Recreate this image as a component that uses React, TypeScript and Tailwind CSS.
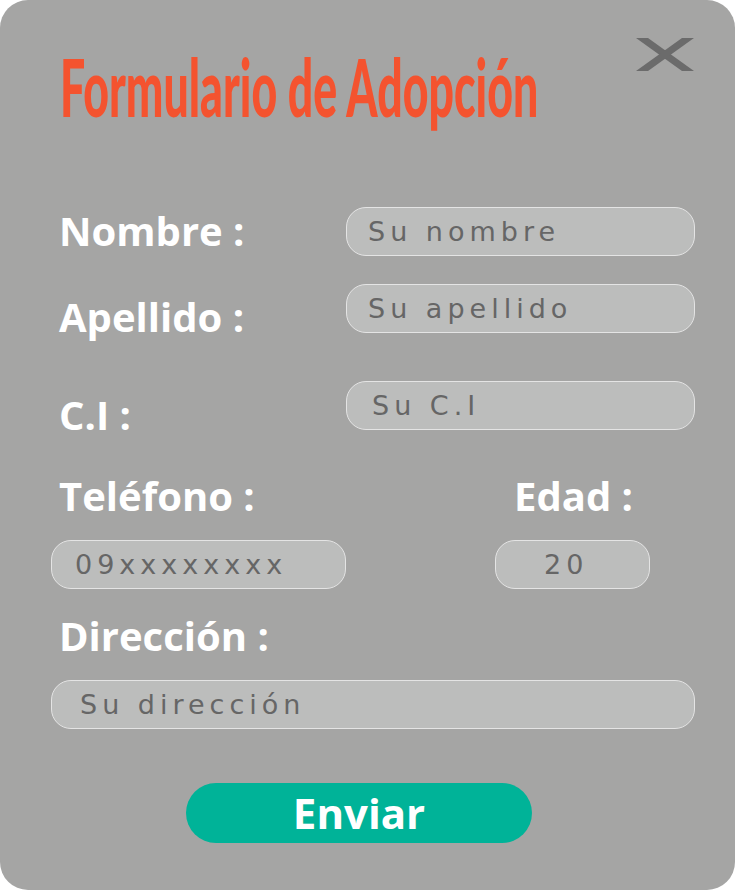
import React from "react";

const labelCls =
  "font-['Open_Sans',sans-serif] font-bold text-[40px] leading-none text-white whitespace-nowrap";
const inputCls =
  "h-[49px] rounded-[20px] border border-[#e4e4e4] bg-[#bcbdbc] font-['DejaVu_Sans',sans-serif] text-[27px] leading-none tracking-[5px] text-[#666] placeholder:text-[#666] outline-none";

const CloseIcon = () => (
  <svg width="58" height="33" viewBox="0 0 58 33">
    <polygon points="0,0 12,0 58,33 46,33" fill="#6b6b6b" />
    <polygon points="46,0 58,0 12,33 0,33" fill="#6b6b6b" />
  </svg>
);

const App = () => {
  return (
    <div className="w-[736px] h-[892px] bg-white">
      <div className="relative w-[735px] h-[890px] rounded-[28px] bg-[#a5a5a4] pl-[51px] pt-[46px]">
        <button className="absolute right-[41px] top-[38px]" aria-label="Cerrar">
          <CloseIcon />
        </button>

        <h1 className="h-[80px] ml-[9px] whitespace-nowrap">
          <span className="inline-block -mr-[376px] origin-left scale-x-[0.558] font-['Lato',sans-serif] font-black text-[80px] leading-none text-[#f4532f]">
            Formulario de Adopción
          </span>
        </h1>

        {/* nombre */}
        <div className="flex items-start h-[49px] mt-[81px]">
          <label className={`${labelCls} w-[295px] pl-[8px] mt-[4px]`}>Nombre :</label>
          <input className={`${inputCls} w-[349px] pl-[21px]`} placeholder="Su nombre" />
        </div>

        {/* apellido */}
        <div className="flex items-start h-[49px] mt-[28px]">
          <label className={`${labelCls} w-[295px] pl-[8px] mt-[13px]`}>Apellido :</label>
          <input className={`${inputCls} w-[349px] pl-[21px]`} placeholder="Su apellido" />
        </div>

        {/* ci */}
        <div className="flex items-start h-[49px] mt-[48px]">
          <label className={`${labelCls} w-[295px] pl-[8px] mt-[14px]`}>C.I :</label>
          <input className={`${inputCls} w-[349px] pl-[25px]`} placeholder="Su C.I" />
        </div>

        {/* telefono / edad */}
        <div className="flex h-[40px] mt-[46px]">
          <label className={`${labelCls} w-[463px] pl-[8px]`}>Teléfono :</label>
          <label className={labelCls}>Edad :</label>
        </div>
        <div className="flex mt-[24px]">
          <input className={`${inputCls} w-[295px] pl-[23px]`} placeholder="09xxxxxxxx" />
          <input className={`${inputCls} w-[155px] ml-[149px] pl-[48px]`} placeholder="20" />
        </div>

        {/* direccion */}
        <div className="h-[40px] mt-[27px]">
          <label className={`${labelCls} block pl-[8px]`}>Dirección :</label>
        </div>
        <input className={`${inputCls} block mt-[24px] w-[644px] pl-[28px]`} placeholder="Su dirección" />

        <button className="mt-[54px] ml-[135px] w-[346px] h-[60px] rounded-full bg-[#00b398] font-['Open_Sans',sans-serif] font-bold text-[42px] leading-none text-white">
          Enviar
        </button>
      </div>
    </div>
  );
};

export default App;
